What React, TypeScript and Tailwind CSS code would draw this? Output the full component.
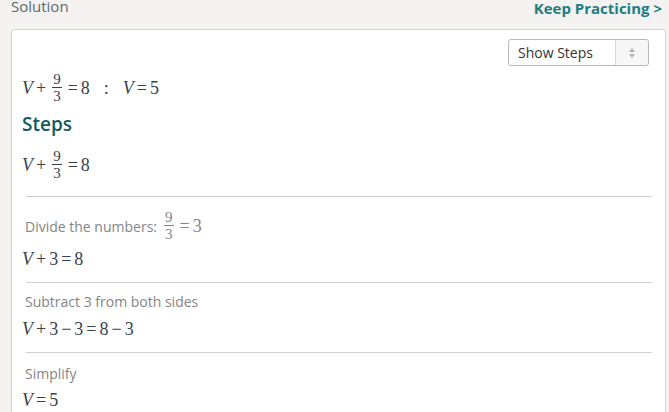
import React from "react";

const mathFont = { fontFamily: '"Liberation Serif", "DejaVu Serif", serif' };

function V() {
  return <span className="italic">V</span>;
}

function Frac({ n, d }: { n: string; d: string }) {
  return (
    <span className="inline-flex flex-col items-center align-middle mx-[3px] text-[15px] leading-[14px] relative top-[-1px]">
      <span className="px-[1px]">{n}</span>
      <span className="block w-full h-px bg-current my-[1px]" />
      <span className="px-[1px]">{d}</span>
    </span>
  );
}

function Op({ c }: { c: string }) {
  return <span className="mx-[3px]">{c}</span>;
}

function Math({ children, className = "" }: { children: React.ReactNode; className?: string }) {
  return (
    <div className={"text-[18px] text-[#36434d] leading-none flex items-center " + className} style={mathFont}>
      {children}
    </div>
  );
}

function Hr() {
  return <div className="h-px bg-[#cfcfcf] ml-[4px] mr-[13px]" />;
}

export default function App() {
  const ui = { fontFamily: '"Open Sans", "Noto Sans", sans-serif' };
  return (
    <div className="w-[669px] h-[412px] bg-[#f4f3f1] overflow-hidden" style={ui}>
      <div className="flex justify-between items-start h-[29px] pl-[11px] pr-[7px]">
        <div className="text-[15px] text-[#5c6b70] leading-none mt-[-1px]">Solution</div>
        <div className="text-[15px] font-bold text-[#1c7d83] leading-none mt-[1px]">Keep Practicing &gt;</div>
      </div>
      <div className="ml-[11px] w-[655px] h-[400px] bg-white border border-[#d3d3d3] rounded-[4px] pl-[10px] pt-[9px]">
        <div className="flex justify-end pr-[16px]">
          <div className="w-[141px] h-[27px] border border-[#b8b8b8] rounded-[3px] flex items-stretch bg-white">
            <div className="flex-1 text-[14px] text-[#333] flex items-center pl-[9px]">Show Steps</div>
            <div className="w-[33px] border-l border-[#d6d6d6] bg-[#f7f7f7] rounded-r-[3px] flex items-center justify-center">
              <svg width="8" height="12" viewBox="0 0 8 12">
                <path d="M4 1 L7 5 H1 Z" fill="#b0b0b0" />
                <path d="M4 11 L7 7 H1 Z" fill="#b0b0b0" />
              </svg>
            </div>
          </div>
        </div>
        <Math className="mt-[7px] h-[30px]">
          <V /><Op c="+" /><Frac n="9" d="3" /><Op c="=" />8
          <span className="ml-[14px] mr-[14px]">:</span>
          <V /><Op c="=" />5
        </Math>
        <div className="text-[19px] text-[#0f5c62] font-semibold leading-none mt-[12px]">Steps</div>
        <Math className="mt-[15px] h-[32px]">
          <V /><Op c="+" /><Frac n="9" d="3" /><Op c="=" />8
        </Math>
        <div className="mt-[15px]"><Hr /></div>
        <div className="flex items-center mt-[14px] h-[30px] ml-[3px] text-[14px] text-[#858585]">
          <span className="mr-[4px]">Divide the numbers:</span>
          <span className="flex items-center text-[18px] text-[#858585]" style={mathFont}>
            <Frac n="9" d="3" /><Op c="=" />3
          </span>
        </div>
        <Math className="mt-[8px] h-[20px]">
          <V /><Op c="+" />3<Op c="=" />8
        </Math>
        <div className="mt-[13px]"><Hr /></div>
        <div className="text-[14px] text-[#858585] mt-[12px] ml-[3px] leading-none">Subtract 3 from both sides</div>
        <Math className="mt-[10px] h-[20px]">
          <V /><Op c="+" />3<Op c="−" />3<Op c="=" />8<Op c="−" />3
        </Math>
        <div className="mt-[13px]"><Hr /></div>
        <div className="text-[14px] text-[#858585] mt-[14px] ml-[3px] leading-none">Simplify</div>
        <Math className="mt-[9px] h-[20px]">
          <V /><Op c="=" />5
        </Math>
      </div>
    </div>
  );
}
